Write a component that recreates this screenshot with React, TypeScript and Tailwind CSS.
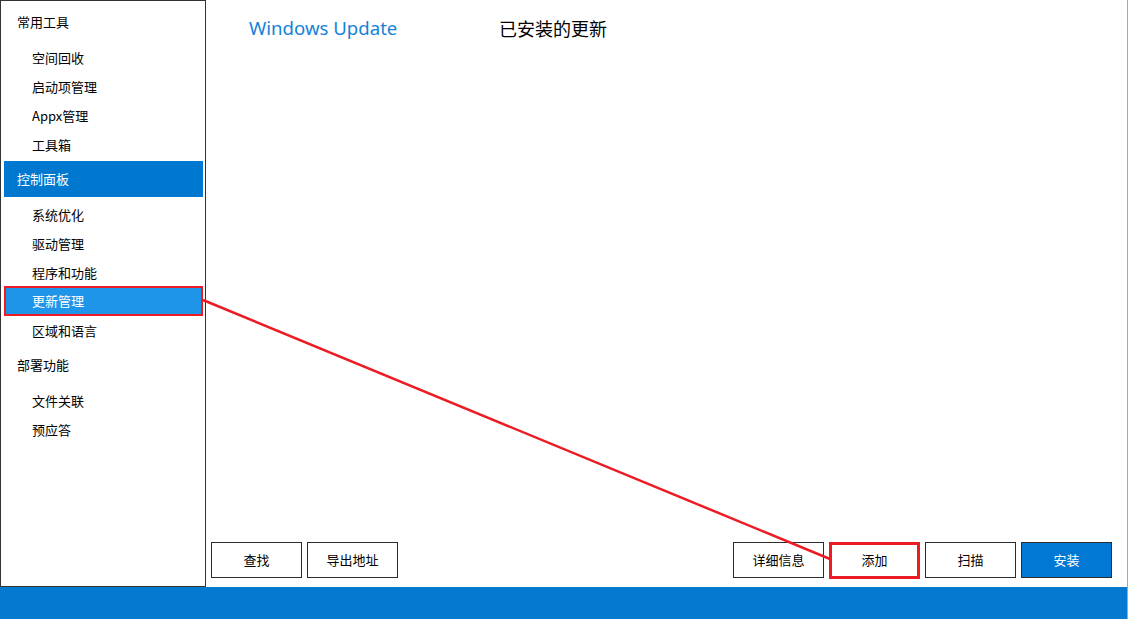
import React from "react";

const groups = [
  { title: "常用工具", items: ["空间回收", "启动项管理", "Appx管理", "工具箱"], active: false },
  { title: "控制面板", items: ["系统优化", "驱动管理", "程序和功能", "更新管理", "区域和语言"], active: true },
  { title: "部署功能", items: ["文件关联", "预应答"], active: false },
];

function Btn({ label, variant }: { label: string; variant?: "primary" | "marked" }) {
  if (variant === "primary") {
    return (
      <div className="w-[91px] h-[36px] border border-[#2d2d2d] bg-[#0078d4] text-white flex items-center justify-center text-[13px] pb-[1px]">
        {label}
      </div>
    );
  }
  if (variant === "marked") {
    return (
      <div className="w-[91px] h-[37px] border-[3px] border-[#ec1c24] bg-white text-black flex items-center justify-center text-[13px] pb-[1px]">
        {label}
      </div>
    );
  }
  return (
    <div className="w-[91px] h-[36px] border border-[#2d2d2d] bg-white text-black flex items-center justify-center text-[13px] pb-[1px]">
      {label}
    </div>
  );
}

export default function App() {
  return (
    <div
      className="relative w-[1128px] h-[619px] bg-white flex flex-col border-r border-[#a8a8a8] overflow-hidden"
      style={{ fontFamily: '"Noto Sans CJK SC", "Noto Sans", sans-serif' }}
    >
      <div className="flex h-[587px]">
        {/* Sidebar */}
        <div className="w-[206px] h-[587px] border border-[#333333] pl-[3px] pr-[2px] pt-[3px] flex flex-col">
          {groups.map((g, gi) => (
            <div key={gi} className={gi > 0 ? "mt-[2px]" : ""}>
              <div
                className={
                  "h-[36px] flex items-center pl-[13px] text-[13px] " +
                  (g.active ? "bg-[#0078d0] text-white" : "text-black")
                }
              >
                {g.title}
              </div>
              <div className="pt-[3px]">
                {g.items.map((it) =>
                  it === "更新管理" ? (
                    <div
                      key={it}
                      className="h-[30px] -mt-[1px] flex items-center pl-[26px] text-[13px] text-white bg-[#1e95e8] border-[2px] border-[#ec1c24]"
                    >
                      {it}
                    </div>
                  ) : (
                    <div key={it} className="h-[29px] flex items-center pl-[28px] text-[13px] text-black">
                      {it}
                    </div>
                  )
                )}
              </div>
            </div>
          ))}
        </div>

        {/* Main */}
        <div className="flex-1 flex flex-col">
          <div className="flex items-center pt-[16px] pl-[43px] leading-[24px]">
            <div className="w-[250px] text-[18.6px] text-[#1482d6]" style={{ fontFamily: '"Noto Sans", sans-serif' }}>
              Windows Update
            </div>
            <div className="text-[18px] text-black">已安装的更新</div>
          </div>
          <div className="flex-1" />
          <div className="flex items-start justify-between pl-[5px] pr-[15px] h-[45px]">
            <div className="flex gap-[5px]">
              <Btn label="查找" />
              <Btn label="导出地址" />
            </div>
            <div className="flex gap-[5px]">
              <Btn label="详细信息" />
              <Btn label="添加" variant="marked" />
              <Btn label="扫描" />
              <Btn label="安装" variant="primary" />
            </div>
          </div>
        </div>
      </div>
      <div className="h-[32px] bg-[#0479cf]" />

      <svg className="absolute inset-0 pointer-events-none" width="1128" height="619">
        <line x1="203" y1="300" x2="830" y2="559" stroke="#ec1c24" strokeWidth="2.5" />
      </svg>
    </div>
  );
}
